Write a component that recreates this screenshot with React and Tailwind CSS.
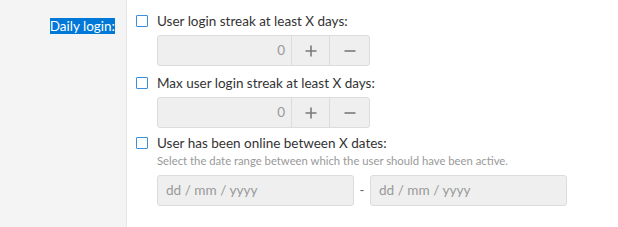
import React from 'react';

const font = { fontFamily: '"Lato", "Open Sans", sans-serif' };

function Checkbox() {
  return <span className="inline-block w-[12px] h-[12px] border border-[#3d8fdc] bg-white rounded-[1px] shrink-0" />;
}

function CheckRow({ label }) {
  return (
    <div className="flex items-center h-5 gap-[9px]">
      <Checkbox />
      <span className="text-[13.5px] text-[#333]">{label}</span>
    </div>
  );
}

function Stepper() {
  return (
    <div className="ml-[21px] flex w-[213px] h-[31px] border border-[#dcdcdc] rounded-[3px] bg-[#efefef]">
      <div className="flex-1 flex items-center justify-end pr-[6px] text-[13.5px] text-[#999]">0</div>
      <div className="w-[38px] border-l border-[#dcdcdc] flex items-center justify-center">
        <svg width="12" height="12" viewBox="0 0 12 12">
          <path d="M6 0.5v11M0.5 6h11" stroke="#7a7a7a" strokeWidth="1.6" />
        </svg>
      </div>
      <div className="w-[40px] border-l border-[#dcdcdc] flex items-center justify-center">
        <svg width="12" height="12" viewBox="0 0 12 12">
          <path d="M0.5 6h11" stroke="#7a7a7a" strokeWidth="1.6" />
        </svg>
      </div>
    </div>
  );
}

function DateBox() {
  return (
    <div className="w-[197px] h-[31px] border border-[#dcdcdc] rounded-[3px] bg-[#efefef] flex items-center pl-[8px] text-[13.6px] text-[#999]">
      dd / mm / yyyy
    </div>
  );
}

export default function App() {
  return (
    <div className="flex h-[227px] bg-white" style={font}>
      <div className="w-[127px] bg-[#f4f4f4] border-r border-[#e6e6e6] pt-[13px] pr-[11px] text-right shrink-0">
        <span className="bg-[#0078d7] text-white text-[13.5px] leading-[16px] inline-block h-[16px]">Daily login:</span>
      </div>
      <div className="flex-1 pl-[9px] pt-[11px]">
        <CheckRow label="User login streak at least X days:" />
        <div className="mt-[4px]"><Stepper /></div>
        <div className="mt-[7px]"><CheckRow label="Max user login streak at least X days:" /></div>
        <div className="mt-[4px]"><Stepper /></div>
        <div className="mt-[5px]"><CheckRow label="User has been online between X dates:" /></div>
        <div className="ml-[21px] text-[11.3px] leading-[16px] text-[#999]">
          Select the date range between which the user should have been active.
        </div>
        <div className="ml-[21px] mt-[6px] flex items-center">
          <DateBox />
          <span className="w-[16px] text-center text-[13px] text-[#666]">-</span>
          <DateBox />
        </div>
      </div>
    </div>
  );
}
